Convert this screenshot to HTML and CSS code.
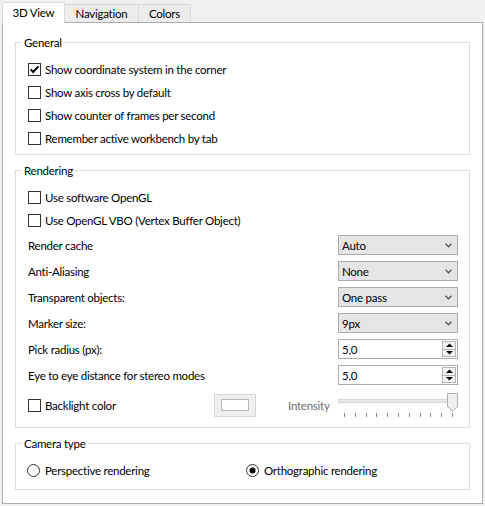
FILE: index.html
```html
<!DOCTYPE html>
<html>
<head>
<meta charset="utf-8">
<link rel="stylesheet" href="styles.css">
</head>
<body>
<div class="tabbar">
  <div class="tab tab-active">3D View</div>
  <div class="tab tab-nav">Navigation</div>
  <div class="tab tab-colors">Colors</div>
</div>
<div class="pane">
  <fieldset class="group group-general">
    <legend>General</legend>
    <div class="check-row"><span class="checkbox"><svg width="11" height="11" viewBox="0 0 11 11"><polyline points="1.6,5.4 4.2,8 9.4,2.4" fill="none" stroke="#000" stroke-width="2"/></svg></span>Show coordinate system in the corner</div>
    <div class="check-row"><span class="checkbox"></span>Show axis cross by default</div>
    <div class="check-row"><span class="checkbox"></span>Show counter of frames per second</div>
    <div class="check-row"><span class="checkbox"></span>Remember active workbench by tab</div>
  </fieldset>

  <fieldset class="group group-rendering">
    <legend>Rendering</legend>
    <div class="check-row"><span class="checkbox"></span>Use software OpenGL</div>
    <div class="check-row"><span class="checkbox"></span>Use OpenGL VBO (Vertex Buffer Object)</div>
    <div class="field-row"><span>Render cache</span><div class="combo"><span>Auto</span><svg class="chev" width="7" height="5" viewBox="0 0 7 5"><polyline points="0.5,0.8 3.5,3.8 6.5,0.8" fill="none" stroke="#555" stroke-width="1.3"/></svg></div></div>
    <div class="field-row"><span>Anti-Aliasing</span><div class="combo"><span>None</span><svg class="chev" width="7" height="5" viewBox="0 0 7 5"><polyline points="0.5,0.8 3.5,3.8 6.5,0.8" fill="none" stroke="#555" stroke-width="1.3"/></svg></div></div>
    <div class="field-row"><span>Transparent objects:</span><div class="combo"><span>One pass</span><svg class="chev" width="7" height="5" viewBox="0 0 7 5"><polyline points="0.5,0.8 3.5,3.8 6.5,0.8" fill="none" stroke="#555" stroke-width="1.3"/></svg></div></div>
    <div class="field-row"><span>Marker size:</span><div class="combo"><span>9px</span><svg class="chev" width="7" height="5" viewBox="0 0 7 5"><polyline points="0.5,0.8 3.5,3.8 6.5,0.8" fill="none" stroke="#555" stroke-width="1.3"/></svg></div></div>
    <div class="field-row"><span>Pick radius (px):</span><div class="spin"><span>5,0</span><div class="spin-btns"><span class="spin-btn"><svg width="7" height="4" viewBox="0 0 7 4"><polygon points="0,4 7,4 3.5,0.5" fill="#000"/></svg></span><span class="spin-btn"><svg width="7" height="4" viewBox="0 0 7 4"><polygon points="0,0 7,0 3.5,3.5" fill="#000"/></svg></span></div></div></div>
    <div class="field-row"><span>Eye to eye distance for stereo modes</span><div class="spin"><span>5,0</span><div class="spin-btns"><span class="spin-btn"><svg width="7" height="4" viewBox="0 0 7 4"><polygon points="0,4 7,4 3.5,0.5" fill="#000"/></svg></span><span class="spin-btn"><svg width="7" height="4" viewBox="0 0 7 4"><polygon points="0,0 7,0 3.5,3.5" fill="#000"/></svg></span></div></div></div>
    <div class="backlight-row">
      <div class="check-row"><span class="checkbox"></span>Backlight color</div>
      <div class="color-btn"><span class="swatch"></span></div>
      <div class="intensity">Intensity</div>
      <div class="slider">
        <div class="groove"></div>
        <svg class="handle" width="11" height="19" viewBox="0 0 11 19"><path d="M0.5 0.5 H10.5 V13.5 L5.5 18.5 L0.5 13.5 Z" fill="#eeeeee" stroke="#adadad"/></svg>
        <div class="ticks"><i></i><i></i><i></i><i></i><i></i><i></i><i></i><i></i><i></i><i></i><i></i></div>
      </div>
    </div>
  </fieldset>

  <fieldset class="group group-camera">
    <legend>Camera type</legend>
    <div class="radio-row">
      <div class="radio-item"><svg width="13" height="13" viewBox="0 0 13 13"><circle cx="6.5" cy="6.5" r="6" fill="#fff" stroke="#333"/></svg>Perspective rendering</div>
      <div class="radio-item"><svg width="13" height="13" viewBox="0 0 13 13"><circle cx="6.5" cy="6.5" r="6" fill="#fff" stroke="#333"/><circle cx="6.5" cy="6.5" r="3" fill="#000"/></svg>Orthographic rendering</div>
    </div>
  </fieldset>
</div>
</body>
</html>
```

FILE: styles.css
```css
* { box-sizing: border-box; }

body {
  margin: 0;
  width: 485px;
  height: 506px;
  overflow: hidden;
  background: #f0f0f0;
  color: #000;
  font-family: Lato, "Noto Sans", sans-serif;
  font-size: 11.5px;
  letter-spacing: -0.25px;
  line-height: 15px;
}

.tabbar {
  display: flex;
  align-items: flex-end;
  height: 22px;
  padding-left: 2px;
}

.tab {
  height: 18px;
  border: 1px solid #d9d9d9;
  border-left: none;
  border-bottom: none;
  background: #ececec;
  display: flex;
  align-items: center;
  justify-content: center;
}

.tab-active {
  width: 63px;
  height: 21px;
  margin-bottom: -1px;
  border-left: 1px solid #d9d9d9;
  background: #fff;
  position: relative;
  z-index: 1;
  padding-bottom: 1px;
}

.tab-nav { width: 74px; }
.tab-colors { width: 52px; }

.pane {
  margin: 0 2px;
  height: 482px;
  border: 1px solid #acacac;
  background: #fff;
  padding: 12px 12px 13px 12px;
}

.group {
  margin: 0;
  min-width: 0;
  border: 1px solid #dcdcdc;
  padding: 8px 11px 4px 12px;
}

.group legend {
  padding: 0 2px;
  margin-left: -6px;
  line-height: 15px;
}

.group + .group { margin-top: 8px; }
.group-rendering { padding-bottom: 5px; }
.group-camera { padding-bottom: 7px; }

.check-row {
  display: flex;
  align-items: center;
  gap: 4px;
  height: 23px;
}

.checkbox {
  width: 13px;
  height: 13px;
  flex: none;
  border: 1px solid #333;
  background: #fff;
  display: flex;
  align-items: center;
  justify-content: center;
}

.field-row {
  display: flex;
  align-items: center;
  justify-content: space-between;
  height: 26px;
}

.combo {
  width: 120px;
  height: 20px;
  border: 1px solid #acacac;
  background: #e5e5e5;
  display: flex;
  align-items: center;
  justify-content: space-between;
  padding: 0 5px 0 3px;
}

.spin {
  width: 120px;
  height: 20px;
  border: 1px solid #acacac;
  background: #fff;
  display: flex;
  align-items: center;
  justify-content: space-between;
  padding: 0 1px 0 3px;
}

.spin-btns {
  width: 14px;
  height: 16px;
  border: 1px solid #b4b4b4;
  display: flex;
  flex-direction: column;
}

.spin-btn {
  flex: 1;
  display: flex;
  align-items: center;
  justify-content: center;
  background: #f3f3f3;
}

.spin-btn + .spin-btn { border-top: 1px solid #b4b4b4; }

.backlight-row {
  display: grid;
  grid-template-columns: 186px 42px 82px 120px;
  align-items: center;
  height: 34px;
}

.color-btn {
  height: 23px;
  border: 1px solid #d6d6d6;
  background: #efefef;
  display: flex;
  align-items: center;
  justify-content: center;
}

.swatch {
  width: 28px;
  height: 12px;
  border: 1px solid #b9b9b9;
  background: #fff;
}

.intensity {
  padding-left: 32px;
  color: #6d6d6d;
}

.slider {
  position: relative;
  height: 25px;
}

.groove {
  position: absolute;
  left: 0;
  right: 0;
  top: 6px;
  height: 4px;
  background: #e7e7e7;
  border: 1px solid #d6d6d6;
}

.handle {
  position: absolute;
  right: 0;
  top: 0;
}

.ticks {
  position: absolute;
  left: 0;
  right: 0;
  top: 20px;
  height: 5px;
  padding: 0 5px 0 6px;
  display: flex;
  justify-content: space-between;
}

.ticks i {
  width: 1px;
  height: 4px;
  background: #8a8a8a;
}

.radio-row {
  display: grid;
  grid-template-columns: 219px 1fr;
  align-items: center;
  height: 23px;
  margin-left: -1px;
}

.radio-item {
  display: flex;
  align-items: center;
  gap: 5px;
}

.radio-item svg { flex: none; }
```
